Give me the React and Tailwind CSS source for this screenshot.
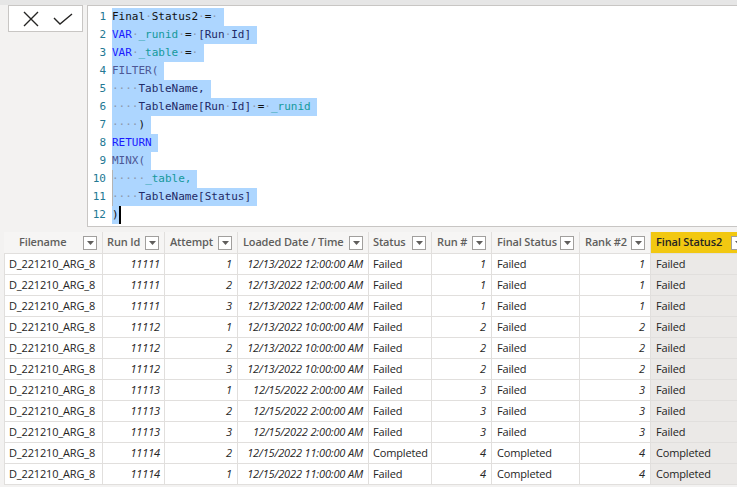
import React from 'react';

const C = {
  d: 'text-[#111111]',
  s: 'text-[#8d9aae]',
  k: 'text-[#1a1aff]',
  v: 'text-[#14999b]',
  f: 'text-[#4d5896]',
  t: 'text-[#1f2a66]',
};

const codeLines = [
  [['Final', 'd'], ['·', 's'], ['Status2', 'd'], ['·', 's'], ['=', 'd'], ['·', 's']],
  [['VAR', 'k'], ['·', 's'], ['_runid', 'v'], ['·', 's'], ['=', 'd'], ['·', 's'], ['[Run', 't'], ['·', 's'], ['Id]', 't']],
  [['VAR', 'k'], ['·', 's'], ['_table', 'v'], ['·', 's'], ['=', 'd'], ['·', 's']],
  [['FILTER(', 'f']],
  [['····', 's'], ['TableName,', 't']],
  [['····', 's'], ['TableName[Run', 't'], ['·', 's'], ['Id]', 't'], ['·', 's'], ['=', 'd'], ['·', 's'], ['_runid', 'v']],
  [['····', 's'], [')', 'd']],
  [['RETURN', 'k']],
  [['MINX(', 'f']],
  [['·····', 's'], ['_table,', 'v']],
  [['····', 's'], ['TableName[Status]', 't']],
  [[')', 'd']],
];

const columns = [
  { name: 'Filename', w: 'w-[99px]', head: 'pl-[15px]' },
  { name: 'Run Id', w: 'w-[62px]', head: 'pl-[4px]' },
  { name: 'Attempt', w: 'w-[73px]', head: 'pl-[5px]' },
  { name: 'Loaded Date / Time', w: 'w-[131px]', head: 'pl-[5px]' },
  { name: 'Status', w: 'w-[63px]', head: 'pl-[4px]' },
  { name: 'Run #', w: 'w-[60px]', head: 'pl-[5px]' },
  { name: 'Final Status', w: 'w-[88px]', head: 'pl-[5px]' },
  { name: 'Rank #2', w: 'w-[71px]', head: 'pl-[5px]' },
  { name: 'Final Status2', w: 'w-[100px]', head: 'pl-[5px]', active: true },
];

const rows = [
  ['11111', 1, '12/13/2022 12:00:00 AM', 'Failed', 1, 'Failed', 1, 'Failed'],
  ['11111', 2, '12/13/2022 12:00:00 AM', 'Failed', 1, 'Failed', 1, 'Failed'],
  ['11111', 3, '12/13/2022 12:00:00 AM', 'Failed', 1, 'Failed', 1, 'Failed'],
  ['11112', 1, '12/13/2022 10:00:00 AM', 'Failed', 2, 'Failed', 2, 'Failed'],
  ['11112', 2, '12/13/2022 10:00:00 AM', 'Failed', 2, 'Failed', 2, 'Failed'],
  ['11112', 3, '12/13/2022 10:00:00 AM', 'Failed', 2, 'Failed', 2, 'Failed'],
  ['11113', 1, '12/15/2022 2:00:00 AM', 'Failed', 3, 'Failed', 3, 'Failed'],
  ['11113', 2, '12/15/2022 2:00:00 AM', 'Failed', 3, 'Failed', 3, 'Failed'],
  ['11113', 3, '12/15/2022 2:00:00 AM', 'Failed', 3, 'Failed', 3, 'Failed'],
  ['11114', 2, '12/15/2022 11:00:00 AM', 'Completed', 4, 'Completed', 4, 'Completed'],
  ['11114', 1, '12/15/2022 11:00:00 AM', 'Failed', 4, 'Completed', 4, 'Completed'],
];

const FilterBox = () => (
  <div className="w-[14px] h-[14px] shrink-0 border border-[#a19f9d] bg-white flex items-center justify-center">
    <svg width="7" height="4" viewBox="0 0 7 4">
      <path d="M0 0 L7 0 L3.5 4 Z" fill="#605e5c" />
    </svg>
  </div>
);

export default function App() {
  return (
    <div
      className="w-[737px] h-[487px] overflow-hidden bg-[#f3f2f1] flex flex-col"
      style={{ fontFamily: '"Open Sans", "Noto Sans", sans-serif' }}
    >
      {/* top strip */}
      <div className="h-[5px] bg-[#e6e6e6] shrink-0" />

      {/* formula bar */}
      <div className="flex shrink-0">
        <div className="w-[87px] shrink-0 pl-[8px]">
          <div className="w-[75px] h-[27px] bg-white border border-[#c8c6c4] flex items-center">
            <svg width="16" height="16" viewBox="0 0 16 16" className="ml-[14px]">
              <path d="M1 1 L15 15 M15 1 L1 15" stroke="#252423" strokeWidth="1.4" fill="none" />
            </svg>
            <svg width="20" height="12" viewBox="0 0 20 12" className="ml-[14px]">
              <path d="M1 5 L7 11 L19 1" stroke="#252423" strokeWidth="1.4" fill="none" />
            </svg>
          </div>
        </div>
        <div className="flex-1 h-[222px] bg-white border-l border-t border-b border-[#c8c6c4] pt-[2px] flex">
          <div
            className="w-[24px] shrink-0 flex flex-col items-end pr-[6px] text-[11px] leading-[18px] text-[#237893]"
            style={{ fontFamily: '"DejaVu Sans Mono", monospace' }}
          >
            {codeLines.map((_, i) => (
              <div key={i} className="h-[18px]">{i + 1}</div>
            ))}
          </div>
          <div
            className="flex flex-col text-[11px] leading-[18px] whitespace-pre"
            style={{ fontFamily: '"DejaVu Sans Mono", monospace' }}
          >
            {codeLines.map((line, i) => (
              <div key={i} className="h-[18px] flex">
                <span
                  className={`bg-[#add6ff] ${i === 11 ? '' : 'pr-[6px]'} ${i === 9 || i === 10 ? 'shadow-[inset_1px_0_0_#b4b4b4]' : ''}`}
                >
                  {line.map(([text, c], j) => (
                    <span key={j} className={C[c]}>{text}</span>
                  ))}
                </span>
                {i === 11 && <span className="w-[2px] h-[18px] bg-black" />}
              </div>
            ))}
          </div>
        </div>
      </div>

      {/* table */}
      <div className="mt-[5px] ml-[4px] flex flex-col text-[11px] tracking-[-0.15px] text-[#252423]">
        <div className="flex h-[21px]">
          {columns.map((col) => (
            <div
              key={col.name}
              className={`${col.w} shrink-0 flex items-center justify-between pr-[5px] border-r border-[#e1dfdd] ${col.head} ${col.active ? 'bg-[#f2c811] text-[#252423]' : 'bg-[#f6f5f4] text-[#605e5c]'}`}
            >
              <span className="font-semibold">{col.name}</span>
              <FilterBox />
            </div>
          ))}
        </div>
        {rows.map((r, i) => (
          <div key={i} className="flex h-[21px] border-t border-[#e1dfdd]">
            <div className="w-[99px] shrink-0 bg-white border-r border-l border-[#e1dfdd] pl-[4px] flex items-center">D_221210_ARG_8</div>
            <div className="w-[62px] shrink-0 bg-white border-r border-[#e1dfdd] pr-[4px] flex items-center justify-end italic">{r[0]}</div>
            <div className="w-[73px] shrink-0 bg-white border-r border-[#e1dfdd] pr-[5px] flex items-center justify-end italic">{r[1]}</div>
            <div className="w-[131px] shrink-0 bg-white border-r border-[#e1dfdd] pr-[5px] flex items-center justify-end italic">{r[2]}</div>
            <div className="w-[63px] shrink-0 bg-white border-r border-[#e1dfdd] pl-[4px] flex items-center">{r[3]}</div>
            <div className="w-[60px] shrink-0 bg-white border-r border-[#e1dfdd] pr-[5px] flex items-center justify-end italic">{r[4]}</div>
            <div className="w-[88px] shrink-0 bg-white border-r border-[#e1dfdd] pl-[5px] flex items-center">{r[5]}</div>
            <div className="w-[71px] shrink-0 bg-white border-r border-[#e1dfdd] pr-[5px] flex items-center justify-end italic">{r[6]}</div>
            <div className="w-[100px] shrink-0 bg-[#ebe9e7] pl-[5px] flex items-center">{r[7]}</div>
          </div>
        ))}
        <div className="h-px w-[747px] bg-[#e1dfdd]" />
      </div>
    </div>
  );
}
